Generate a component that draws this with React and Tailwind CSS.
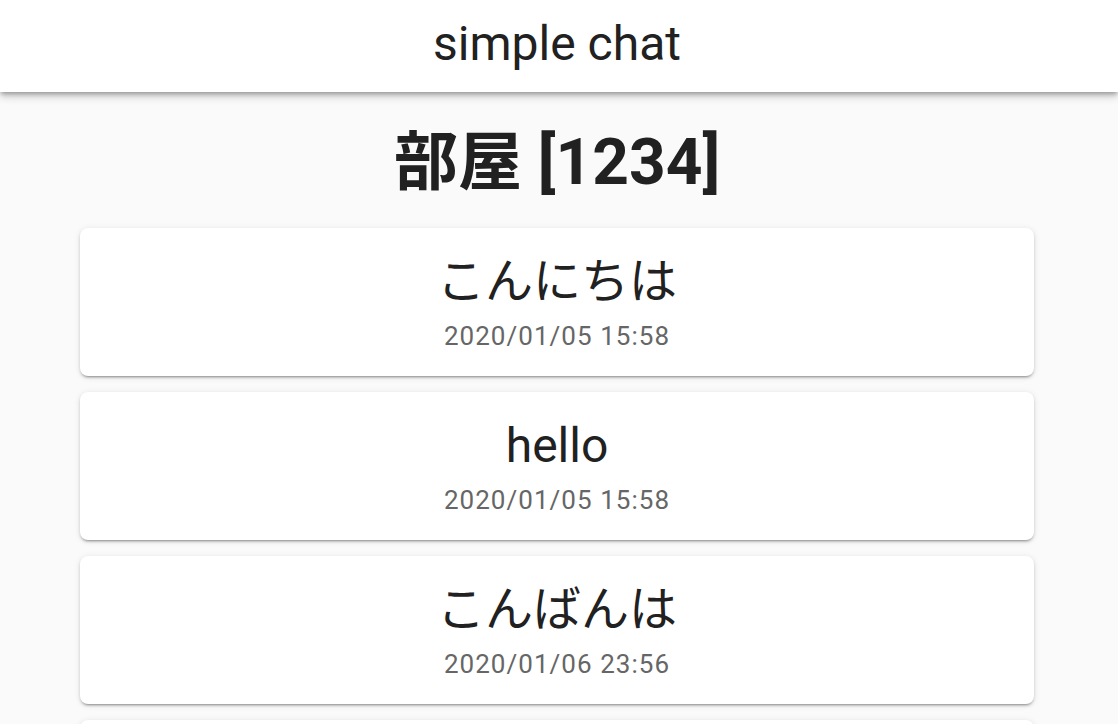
import React from 'react';

const messages = [
  { text: 'こんにちは', date: '2020/01/05 15:58' },
  { text: 'hello', date: '2020/01/05 15:58' },
  { text: 'こんばんは', date: '2020/01/06 23:56' },
  { text: 'おやすみ', date: '2020/01/06 23:58' },
];

function MessageCard({ text, date }) {
  return (
    <div className="bg-white rounded-[8px] pt-[26px] pb-[23px] text-center shadow-[0_3px_2px_-2px_rgba(0,0,0,0.25),0_2px_3px_0_rgba(0,0,0,0.14),0_1px_6px_0_rgba(0,0,0,0.1)]">
      <div className="text-[48px] leading-[56px] text-[#212121]">{text}</div>
      <div className="mt-[9px] text-[26px] leading-[34px] tracking-[0.04em] text-[#666666]">{date}</div>
    </div>
  );
}

export default function App() {
  return (
    <div
      className="h-screen bg-[#fafafa] overflow-hidden"
      style={{ fontFamily: 'Roboto, "Noto Sans CJK JP", sans-serif' }}
    >
      {/* App bar */}
      <header className="relative z-10 h-[92px] pr-[4px] bg-white flex items-center justify-center shadow-[0_3px_4px_-1px_rgba(0,0,0,0.25),0_5px_7px_0_rgba(0,0,0,0.12),0_2px_12px_0_rgba(0,0,0,0.1)]">
        <h1 className="text-[48px] leading-[56px] text-[#212121] -mt-[4px]">simple chat</h1>
      </header>

      <div className="pr-[4px]">
        {/* Room title */}
        <div className="pt-[39px] pb-[33px] text-center">
          <h2 className="text-[64px] leading-[64px] font-bold text-[#212121]">部屋 [1234]</h2>
        </div>

        {/* Messages */}
        <div className="w-[954px] mx-auto flex flex-col gap-[16px] pb-[16px]">
          {messages.map((m, i) => (
            <MessageCard key={i} text={m.text} date={m.date} />
          ))}
        </div>
      </div>
    </div>
  );
}
